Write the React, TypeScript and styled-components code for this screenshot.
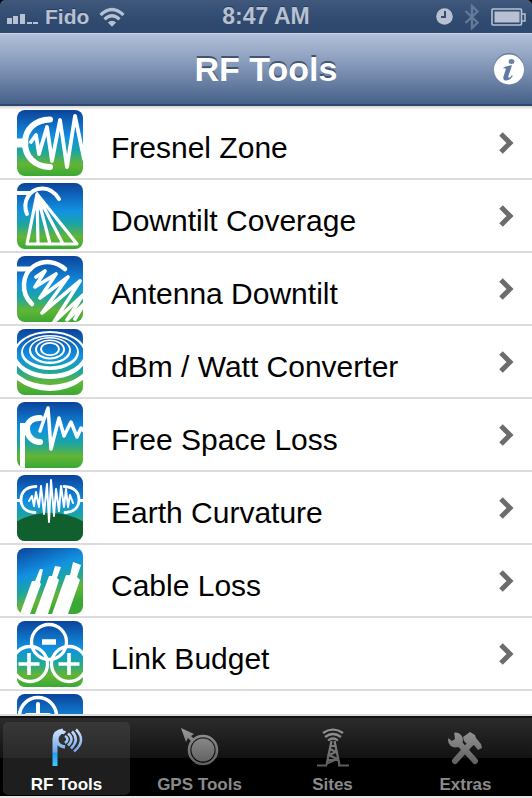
import React from 'react';
import styled, { createGlobalStyle } from 'styled-components';

const GlobalStyle = createGlobalStyle`
  * { box-sizing: border-box; }
  body { margin: 0; background: #e6e6e4; font-family: "Liberation Sans", Arial, sans-serif; }
`;

const Screen = styled.div`
  display: flex;
  flex-direction: column;
  height: 100vh;
  padding-bottom: 2px;
  overflow: hidden;
`;

const StatusFrame = styled.div`
  flex: none;
  background: #000;
`;

const StatusBar = styled.div`
  display: grid;
  grid-template-columns: 1fr auto 1fr;
  align-items: center;
  height: 33px;
  padding: 0 6px;
  border-radius: 5px 5px 0 0;
  background: linear-gradient(#40587c, #304a70 60%, #2f486d);
  color: #b7c1d1;
  font-size: 23px;
  font-weight: bold;
  line-height: 33px;
  text-shadow: 0 -1px 0 #263a59;
`;

const StatusGroup = styled.div<{ $end?: boolean }>`
  display: flex;
  align-items: center;
  justify-content: ${(p) => (p.$end ? 'flex-end' : 'flex-start')};
  gap: ${(p) => (p.$end ? '11px' : '5px')};
`;

const Carrier = styled.span`
  margin-right: 5px;
  font-size: 21px;
`;

const NavBar = styled.header`
  display: grid;
  grid-template-columns: 39px 1fr 39px;
  align-items: center;
  flex: none;
  height: 73px;
  border-top: 1px solid #ccd6e5;
  border-bottom: 2px solid #2e4670;
  background: linear-gradient(#b1c0d8, #8095b6 48%, #466089);
`;

const Title = styled.h1`
  grid-column: 2;
  margin: 0;
  color: #fff;
  font-size: 34px;
  line-height: 40px;
  text-align: center;
  text-shadow: 0 -2px 0 #43546f;
`;

const InfoButton = styled.button`
  display: flex;
  padding: 0;
  border: 0;
  background: none;
`;

const ToolList = styled.ul`
  flex: 1;
  min-height: 0;
  margin: 0;
  padding: 1px 0 0;
  overflow: hidden;
  list-style: none;
  background: linear-gradient(#d4d4d4, #fff 4px);
  border-bottom: 2px solid #dededc;
`;

const ToolRow = styled.li`
  height: 73px;
  border-bottom: 2px solid #dcdcdc;
`;

const ToolLink = styled.a`
  display: flex;
  align-items: center;
  height: 100%;
  padding: 1px 17px 0 17px;
  color: #000;
  text-decoration: none;
`;

const ToolName = styled.span`
  flex: 1;
  margin-left: 28px;
  padding-top: 10px;
  font-size: 30px;
  line-height: 34px;
  white-space: nowrap;
`;

const TabBar = styled.nav`
  display: grid;
  grid-template-columns: repeat(4, 1fr);
  flex: none;
  height: 80px;
  padding-top: 4px;
  border-top: 2px solid #111;
  background: linear-gradient(#2b2b2b, #121212 40px, #000 40px);
`;

const Tab = styled.button<{ $active?: boolean }>`
  display: flex;
  flex-direction: column;
  align-items: center;
  gap: 6px;
  height: 73px;
  margin: 0 3px;
  padding: 5px 0 0;
  border: 0;
  border-radius: 5px;
  background: ${(p) => (p.$active ? 'linear-gradient(#383838, #292929 36px, #1e1e1e 36px)' : 'none')};
  color: ${(p) => (p.$active ? '#fff' : '#8b8b8b')};
  font-family: inherit;
  font-size: 17px;
  font-weight: bold;
  line-height: 20px;
  white-space: nowrap;
`;

const SignalIcon = () => (
  <svg width="34" height="20" viewBox="0 0 34 20" fill="#b7c1d1" aria-hidden="true">
    <path d="M1 11h5v6H1zM7 9h5v8H7zM14 7h5v10h-5zM21 15h5v2h-5zM27 15h5v2h-5z" />
  </svg>
);

const WifiIcon = () => (
  <svg width="26" height="20" viewBox="0 0 26 20" aria-hidden="true">
    <g fill="none" stroke="#b7c1d1" strokeWidth="3.2">
      <path d="M1.5 8Q13-3 24.5 8" />
      <path d="M5.5 12.3q7.500-7 15 0" />
    </g>
    <path d="M8.800 15.500q4.200-3.600 8.400 0L13 19.700z" fill="#b7c1d1" />
  </svg>
);

const ClockIcon = () => (
  <svg width="17" height="17" viewBox="0 0 17 17" aria-hidden="true">
    <circle cx="8.500" cy="8.500" r="8.300" fill="#b7c1d1" />
    <path d="M9 3v6H5" fill="none" stroke="#344d73" strokeWidth="2" />
  </svg>
);

const BluetoothIcon = () => (
  <svg width="16" height="26" viewBox="0 0 16 26" fill="none" stroke="#657999" strokeWidth="2.400" aria-hidden="true">
    <path d="m1.500 7 12 11.500L8 24V2l5.500 5.500L1.500 19" />
  </svg>
);

const BatteryIcon = () => (
  <svg width="35" height="18" viewBox="0 0 35 18" fill="#b7c1d1" aria-hidden="true">
    <rect x="1" y="1" width="29.500" height="16" rx="1" fill="none" stroke="#b7c1d1" strokeWidth="1.600" />
    <rect x="3.500" y="3.500" width="25" height="11" />
    <path d="M31 6h3v7h-3" fill="none" stroke="#b7c1d1" strokeWidth="1.500" />
  </svg>
);

const InfoIcon = () => (
  <svg width="32" height="34" viewBox="0 0 32 34" aria-hidden="true">
    <circle cx="16" cy="16" r="15" fill="#6b7d9b" />
    <circle cx="16" cy="17.500" r="15" fill="#fff" />
    <ellipse cx="18.500" cy="9.500" rx="2.900" ry="2.500" fill="#6e82a5" />
    <path d="M10.500 15.500q4-1.700 8.500-2.200l-3.400 10.200q-.8 2.800.6 2.200 1.200-.5 2.700-2.500l.9.700q-3 4.600-6.400 4.600-4.300 0-2.700-4.800l2-6q.7-2-2.200-1.300z" fill="#6179a0" />
  </svg>
);

const ChevronIcon = () => (
  <svg width="16" height="24" viewBox="0 0 16 24" fill="none" stroke="#6c6c6c" strokeWidth="5" aria-hidden="true">
    <path d="m2 3 9 9-9 9" />
  </svg>
);

type Art = 'fresnel' | 'coverage' | 'downtilt' | 'ripples' | 'freespace' | 'earth' | 'cable' | 'budget' | 'plus';

const ellipsePath = (cy: number, rx: number, ry: number) =>
  `M${33 - rx} ${cy}a${rx} ${ry} 0 1 0 ${rx * 2} 0a${rx} ${ry} 0 1 0 ${-rx * 2} 0z`;

const rippleBands = [
  [27, 45, 35, 24, 43, 32],
  [26, 37, 24, 24.5, 34, 20.5],
  [23.5, 29, 17.5, 22.5, 27, 15],
  [21.5, 21, 13.5, 21, 19, 11.5],
  [20.5, 15, 10, 20.2, 13, 8.2],
  [20, 10, 7, 20, 8, 5.2],
];

const art: Record<Art, React.ReactNode> = {
  fresnel: (
    <>
      <path d="M33 9.500C18 10 8 19 8 33s10 23.500 25 24" strokeWidth="6" />
      <path d="M-3 33h10" strokeWidth="9" />
      <path d="m14 32 5-7 3 19 8-27 5 34 8-41 7 47 8-51 9 43" strokeWidth="3.800" />
    </>
  ),
  coverage: (
    <>
      <path d="M-2 10h15" strokeWidth="4" />
      <path d="M10 31C5 19 12 6 25 5.500c8-.3 13 4 17 10.500" strokeWidth="4" />
      <path d="M20 11 10 61h50zM20 11l1 50M20 11l13 50M20 11l26 50" strokeWidth="3.200" />
      <path d="m20 10-4 18 12-2z" fill="#fff" stroke="none" />
    </>
  ),
  downtilt: (
    <>
      <path d="M-2 13h15" strokeWidth="5" />
      <path d="M15 48C3 37 5 18 17 10c11-7 23-4 31 3" strokeWidth="4.500" />
      <path d="m19 21 9-6-10 16 21-13-16 24 28-21-26 36 38-32-26 41 29-27-16 25 17-16-9 15" strokeWidth="3.600" />
    </>
  ),
  ripples: (
    <g fill="#fff" fillRule="evenodd" stroke="none">
      {rippleBands.map(([cy, rx, ry, innerCy, innerRx, innerRy]) => (
        <path key={rx} d={ellipsePath(cy, rx, ry) + ellipsePath(innerCy, innerRx, innerRy)} />
      ))}
    </g>
  ),
  freespace: (
    <>
      <path d="M23 16c-9 0-13 5-13 11s5 13 13 13" strokeWidth="6" />
      <path d="M3 21h7v7H8v39H3z" fill="#fff" stroke="none" />
      <path d="m23 29 8-23 3 41 8-31 5 18 7-14 6 15 4-9 4 4" strokeWidth="3.500" />
    </>
  ),
  earth: (
    <>
      <ellipse cx="33" cy="67" rx="47" ry="29" fill="#10602f" stroke="none" />
      <path d="M19 11.500C8 12 4 18 4 25s5 12 14 12.500M47 11.500C58 12 62 18 62 25s-5 12-14 12.500M-2 25.500h5M63 25.500h5" strokeWidth="2.800" />
      <path d="m12 26 3-5 2 10 2-14 3 15 2-21 3 28 3-30 2 38 2-42 3 36 2-27 3 22 2-25 3 21 2-18 2 18 2-12 3 8" strokeWidth="2" />
    </>
  ),
  cable: (
    <g fill="#fff" stroke="none">
      <path d="m23 21 3 .5-3 13 1 1.500-11 30H3l12-33h3zM38 18l6 1-4 11 2 2-11 34H18l14-38h3zM56 14l8 3-4 12 3 3-12 34H35l14-39h4z" />
    </g>
  ),
  budget: (
    <>
      <g strokeWidth="3.300">
        <circle cx="32" cy="21" r="17.500" />
        <circle cx="13" cy="43" r="17.500" />
        <circle cx="52" cy="43" r="17.500" />
      </g>
      <path d="M25 21h14" strokeWidth="5.500" strokeLinecap="butt" />
      <path d="M1.500 43h21M12 32v22M41.500 43h21M52 32v22" strokeWidth="3.600" strokeLinecap="butt" />
    </>
  ),
  plus: (
    <>
      <circle cx="21" cy="22" r="18.500" strokeWidth="3.500" />
      <path d="M10 21h22M21 10v24" strokeWidth="4" />
    </>
  ),
};

const ToolIcon = ({ kind }: { kind: Art }) => {
  const slanted = kind === 'cable';
  return (
    <svg width="66" height="66" viewBox="0 0 66 66" aria-hidden="true">
      <defs>
        <linearGradient id={`sky-${kind}`} x1="0" y1="0" x2={slanted ? '0.35' : '0'} y2="1">
          <stop offset="0" stopColor="#0b439b" />
          <stop offset="0.42" stopColor="#1291e2" />
          <stop offset="0.62" stopColor="#1ba5a4" />
          <stop offset="0.82" stopColor="#63b534" />
          <stop offset="1" stopColor="#39a935" />
        </linearGradient>
        <clipPath id={`tile-${kind}`}>
          <rect width="66" height="66" rx="8" />
        </clipPath>
      </defs>
      <g clipPath={`url(#tile-${kind})`} fill="none" stroke="#fff" strokeLinecap="round" strokeLinejoin="round">
        <rect width="66" height="66" fill={`url(#sky-${kind})`} stroke="none" />
        {art[kind]}
      </g>
    </svg>
  );
};

const RfIcon = () => (
  <svg width="40" height="42" viewBox="0 0 40 42" fill="none" aria-hidden="true">
    <defs>
      <linearGradient id="rf" x1="0" y1="0" x2="0" y2="42" gradientUnits="userSpaceOnUse">
        <stop offset="0" stopColor="#d5e8ff" />
        <stop offset="0.6" stopColor="#70a6e9" />
        <stop offset="0.62" stopColor="#239cf5" />
        <stop offset="1" stopColor="#49d3ff" />
      </linearGradient>
    </defs>
    <g stroke="url(#rf)">
      <path d="M18 6q-2-2-5 0-4 3-3 8t8 6" strokeWidth="3.600" />
      <path d="M8 39V12q0-7 8-8" strokeWidth="5" />
      <path d="M18 9q5 3 0 7M21 6.500q7 5.500 0 12M25 4.500q8 8-1 17M29 2.500q11 11-2 22" strokeWidth="2.600" />
    </g>
  </svg>
);

const GreyFill = ({ id }: { id: string }) => (
  <defs>
    <linearGradient id={id} x1="0" y1="0" x2="0" y2="42" gradientUnits="userSpaceOnUse">
      <stop offset="0" stopColor="#999" />
      <stop offset="1" stopColor="#585858" />
    </linearGradient>
  </defs>
);

const GpsIcon = () => (
  <svg width="40" height="42" viewBox="0 0 40 42" aria-hidden="true">
    <GreyFill id="gps" />
    <g fill="url(#gps)">
      <path d="m1 1 13 6-3 2 3 3-3 2-3-3-2 4z" />
      <circle cx="23" cy="23" r="11.500" />
      <circle cx="23" cy="23" r="14" fill="none" stroke="url(#gps)" strokeWidth="2.600" />
    </g>
  </svg>
);

const SitesIcon = () => (
  <svg width="34" height="42" viewBox="0 0 34 42" fill="none" aria-hidden="true">
    <GreyFill id="sites" />
    <g stroke="url(#sites)" strokeWidth="2.200">
      <path d="M7 6q10-7 20 0M9 10q8-6 16 0M12 13.500q5-4 10 0" />
      <path d="m15.500 14-5 24M18.500 14l5 24M15 19h4M14 22l6 3-7 3 8 4-9 4M12 33h10" />
      <path d="M1 38.500h10M22 38.500h11" />
    </g>
  </svg>
);

const ExtrasIcon = () => (
  <svg width="40" height="42" viewBox="0 0 40 42" aria-hidden="true">
    <GreyFill id="extras" />
    <g stroke="url(#extras)" strokeWidth="6" strokeLinecap="round">
      <path d="m12 15 17 19M26 15 9 34" />
    </g>
    <circle cx="9.500" cy="13" r="7.500" fill="url(#extras)" />
    <path d="M3 5h5l1 7-3 2-4-3z" fill="#222" />
    <path d="m17 10 7-5 5 3 1 3 5 6 1 4-4 2-4-5-4 2-6-6z" fill="url(#extras)" />
  </svg>
);

const tools: { name: string; kind: Art }[] = [
  { name: 'Fresnel Zone', kind: 'fresnel' },
  { name: 'Downtilt Coverage', kind: 'coverage' },
  { name: 'Antenna Downtilt', kind: 'downtilt' },
  { name: 'dBm / Watt Converter', kind: 'ripples' },
  { name: 'Free Space Loss', kind: 'freespace' },
  { name: 'Earth Curvature', kind: 'earth' },
  { name: 'Cable Loss', kind: 'cable' },
  { name: 'Link Budget', kind: 'budget' },
  { name: '', kind: 'plus' },
];

const tabs = [
  { name: 'RF Tools', Icon: RfIcon },
  { name: 'GPS Tools', Icon: GpsIcon },
  { name: 'Sites', Icon: SitesIcon },
  { name: 'Extras', Icon: ExtrasIcon },
];

export default function App() {
  return (
    <Screen>
      <GlobalStyle />
      <StatusFrame>
        <StatusBar>
          <StatusGroup>
            <SignalIcon />
            <Carrier>Fido</Carrier>
            <WifiIcon />
          </StatusGroup>
          <span>8:47 AM</span>
          <StatusGroup $end>
            <ClockIcon />
            <BluetoothIcon />
            <BatteryIcon />
          </StatusGroup>
        </StatusBar>
      </StatusFrame>
      <NavBar>
        <Title>RF Tools</Title>
        <InfoButton aria-label="Info">
          <InfoIcon />
        </InfoButton>
      </NavBar>
      <ToolList>
        {tools.map(({ name, kind }) => (
          <ToolRow key={kind}>
            <ToolLink href="#" aria-label={name || 'More'}>
              <ToolIcon kind={kind} />
              <ToolName>{name}</ToolName>
              <ChevronIcon />
            </ToolLink>
          </ToolRow>
        ))}
      </ToolList>
      <TabBar>
        {tabs.map(({ name, Icon }, i) => (
          <Tab key={name} $active={i === 0} aria-current={i === 0 ? 'page' : undefined}>
            <Icon />
            <span>{name}</span>
          </Tab>
        ))}
      </TabBar>
    </Screen>
  );
}
